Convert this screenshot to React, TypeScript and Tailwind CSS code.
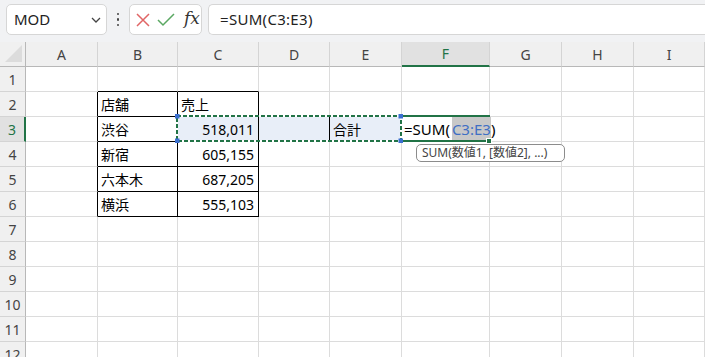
import React from "react";

const COLS = ["A", "B", "C", "D", "E", "F", "G", "H", "I"];
const ROWS = Array.from({ length: 12 }, (_, i) => i + 1);

const DATA: Record<string, string> = {
  B2: "店舗",
  C2: "売上",
  B3: "渋谷",
  C3: "518,011",
  B4: "新宿",
  C4: "605,155",
  B5: "六本木",
  C5: "687,205",
  B6: "横浜",
  C6: "555,103",
  E3: "合計",
};

const RIGHT = new Set(["C3", "C4", "C5", "C6"]);

function cellClass(col: string, row: number) {
  const inTable = (col === "B" || col === "C") && row >= 2 && row <= 6;
  const blackRight =
    inTable || (col === "A" && row >= 2 && row <= 6) || (col === "D" && row === 3);
  const blackBottom = inTable || ((col === "B" || col === "C") && row === 1);
  const fill = row === 3 && (col === "C" || col === "D" || col === "E");
  return [
    "h-[25px] border-r border-b flex items-center overflow-hidden whitespace-nowrap text-[14px] text-black",
    blackRight ? "border-r-black" : "border-r-[#dcdcdc]",
    blackBottom ? "border-b-black" : "border-b-[#dcdcdc]",
    fill ? "bg-[#e8eef8]" : "bg-white",
    RIGHT.has(col + row) ? "justify-end pr-[4px]" : "pl-[3px]",
  ].join(" ");
}

function Toolbar() {
  return (
    <div className="h-[42px] bg-[#f1f2f4] flex items-start pt-[4px] pl-[6px]">
      {/* Name box */}
      <div className="w-[101px] h-[31px] bg-white border border-[#d6d6d6] rounded-[5px] flex items-center justify-between pl-[7px] pr-[4px]">
        <span className="text-[15px] text-[#222]">MOD</span>
        <svg width="12" height="8" viewBox="0 0 12 8">
          <path d="M2 2 L6 6 L10 2" fill="none" stroke="#444" strokeWidth="1.3" />
        </svg>
      </div>
      <div className="w-[22px] h-[31px] flex flex-col items-center justify-center gap-[3px]">
        <span className="w-[2.5px] h-[2.5px] rounded-full bg-[#444]" />
        <span className="w-[2.5px] h-[2.5px] rounded-full bg-[#444]" />
        <span className="w-[2.5px] h-[2.5px] rounded-full bg-[#444]" />
      </div>
      {/* cancel / enter / fx */}
      <div className="w-[73px] h-[31px] bg-white border border-[#d6d6d6] rounded-[5px] flex items-center pl-[5px]">
        <svg width="16" height="16" viewBox="0 0 16 16">
          <path d="M2 2 L14 14 M14 2 L2 14" stroke="#e06666" strokeWidth="1.5" />
        </svg>
        <svg width="18" height="14" viewBox="0 0 18 14" className="ml-[6px]">
          <path d="M1 7 L6 12 L17 1" fill="none" stroke="#5aa862" strokeWidth="1.5" />
        </svg>
        <span className="ml-[9px] text-[17px] italic text-[#333] font-['DejaVu_Serif',serif] leading-none -mt-[2px]">
          fx
        </span>
      </div>
      {/* formula bar */}
      <div className="flex-1 ml-[6px] h-[31px] bg-white border border-r-0 border-[#d6d6d6] rounded-l-[5px] flex items-center pl-[11px]">
        <span className="text-[15px] text-[#222] tracking-[0.3px]">=SUM(C3:E3)</span>
      </div>
    </div>
  );
}

function Grid() {
  return (
    <div className="relative grid grid-cols-[26px_72px_80px_81px_71px_72px_88px_72px_72px_1fr]">
      {/* header row */}
      <div className="h-[25px] bg-[#f0f0f0] border-r border-b border-r-[#b8b8b8] border-b-[#b8b8b8] relative">
        <svg width="18" height="18" viewBox="0 0 18 18" className="absolute left-[5px] top-[3px]">
          <path d="M17 0 L17 17 L0 17 Z" fill="#dcdcdc" />
        </svg>
      </div>
      {COLS.map((c) =>
        c === "F" ? (
          <div
            key={c}
            className="h-[25px] bg-[#e1e1e1] border-r border-r-[#d4d4d4] border-b-2 border-b-[#217346] flex items-center justify-center text-[14px] text-[#217346]"
          >
            {c}
          </div>
        ) : (
          <div
            key={c}
            className="h-[25px] bg-[#f0f0f0] border-r border-r-[#d4d4d4] border-b border-b-[#b8b8b8] flex items-center justify-center text-[14px] text-[#444]"
          >
            {c}
          </div>
        )
      )}

      {ROWS.map((r) => (
        <React.Fragment key={r}>
          {r === 3 ? (
            <div className="h-[25px] bg-[#e1e1e1] border-r-2 border-r-[#217346] border-b border-b-[#d4d4d4] flex items-center justify-center text-[14px] text-[#217346]">
              {r}
            </div>
          ) : (
            <div className="h-[25px] bg-[#f0f0f0] border-r border-r-[#b8b8b8] border-b border-b-[#d4d4d4] flex items-center justify-center text-[14px] text-[#444]">
              {r}
            </div>
          )}
          {COLS.map((c) =>
            c === "F" && r === 3 ? (
              <div
                key={c}
                className="h-[25px] border-r border-b border-r-[#dcdcdc] border-b-[#dcdcdc] bg-white flex items-center pl-[2px] whitespace-nowrap text-[15px] text-black z-10"
              >
                <span>=SUM(</span>
                <span className="ml-[2px] bg-[#c8c8c8] text-[#3f6fc4] h-[24px] flex items-center">C3:E3</span>
                <span>)</span>
              </div>
            ) : (
              <div key={c} className={cellClass(c, r)}>
                {DATA[c + r] ?? ""}
              </div>
            )
          )}
        </React.Fragment>
      ))}

      {/* reference range C3:E3 */}
      <svg
        width="228"
        height="29"
        viewBox="0 0 228 29"
        className="absolute left-[175px] top-[72px] z-20 pointer-events-none"
      >
        <rect x="2" y="2" width="224" height="25" fill="none" stroke="#ffffff" strokeWidth="2" />
        <rect x="2" y="2" width="224" height="25" fill="none" stroke="#217346" strokeWidth="2" strokeDasharray="4 2" />
        <rect x="0" y="0" width="4.5" height="4.5" fill="#3b6fd0" />
        <rect x="0" y="24.5" width="4.5" height="4.5" fill="#3b6fd0" />
        <rect x="223.5" y="0" width="4.5" height="4.5" fill="#3b6fd0" />
        <rect x="223.5" y="24.5" width="4.5" height="4.5" fill="#3b6fd0" />
      </svg>

      {/* active cell F3 */}
      <div className="absolute left-[403px] top-[73px] w-[87px] h-[2px] bg-[#217346] z-20" />
      <div className="absolute left-[403px] top-[98px] w-[84px] h-[2px] bg-[#217346] z-20" />
      <div className="absolute left-[486px] top-[96px] w-[6px] h-[6px] bg-[#217346] border border-white z-20" />

      {/* function tooltip */}
      <div className="absolute left-[416px] top-[102px] w-[149px] h-[18px] bg-white border border-[#8c8c8c] rounded-[5px] flex items-center pl-[5px] text-[12px] text-[#444] whitespace-nowrap z-30">
        SUM(数値1, [数値2], ...)
      </div>
    </div>
  );
}

export default function App() {
  return (
    <div className="w-[705px] h-[357px] overflow-hidden bg-white font-['Noto_Sans','Noto_Sans_CJK_JP',sans-serif]">
      <Toolbar />
      <Grid />
    </div>
  );
}
